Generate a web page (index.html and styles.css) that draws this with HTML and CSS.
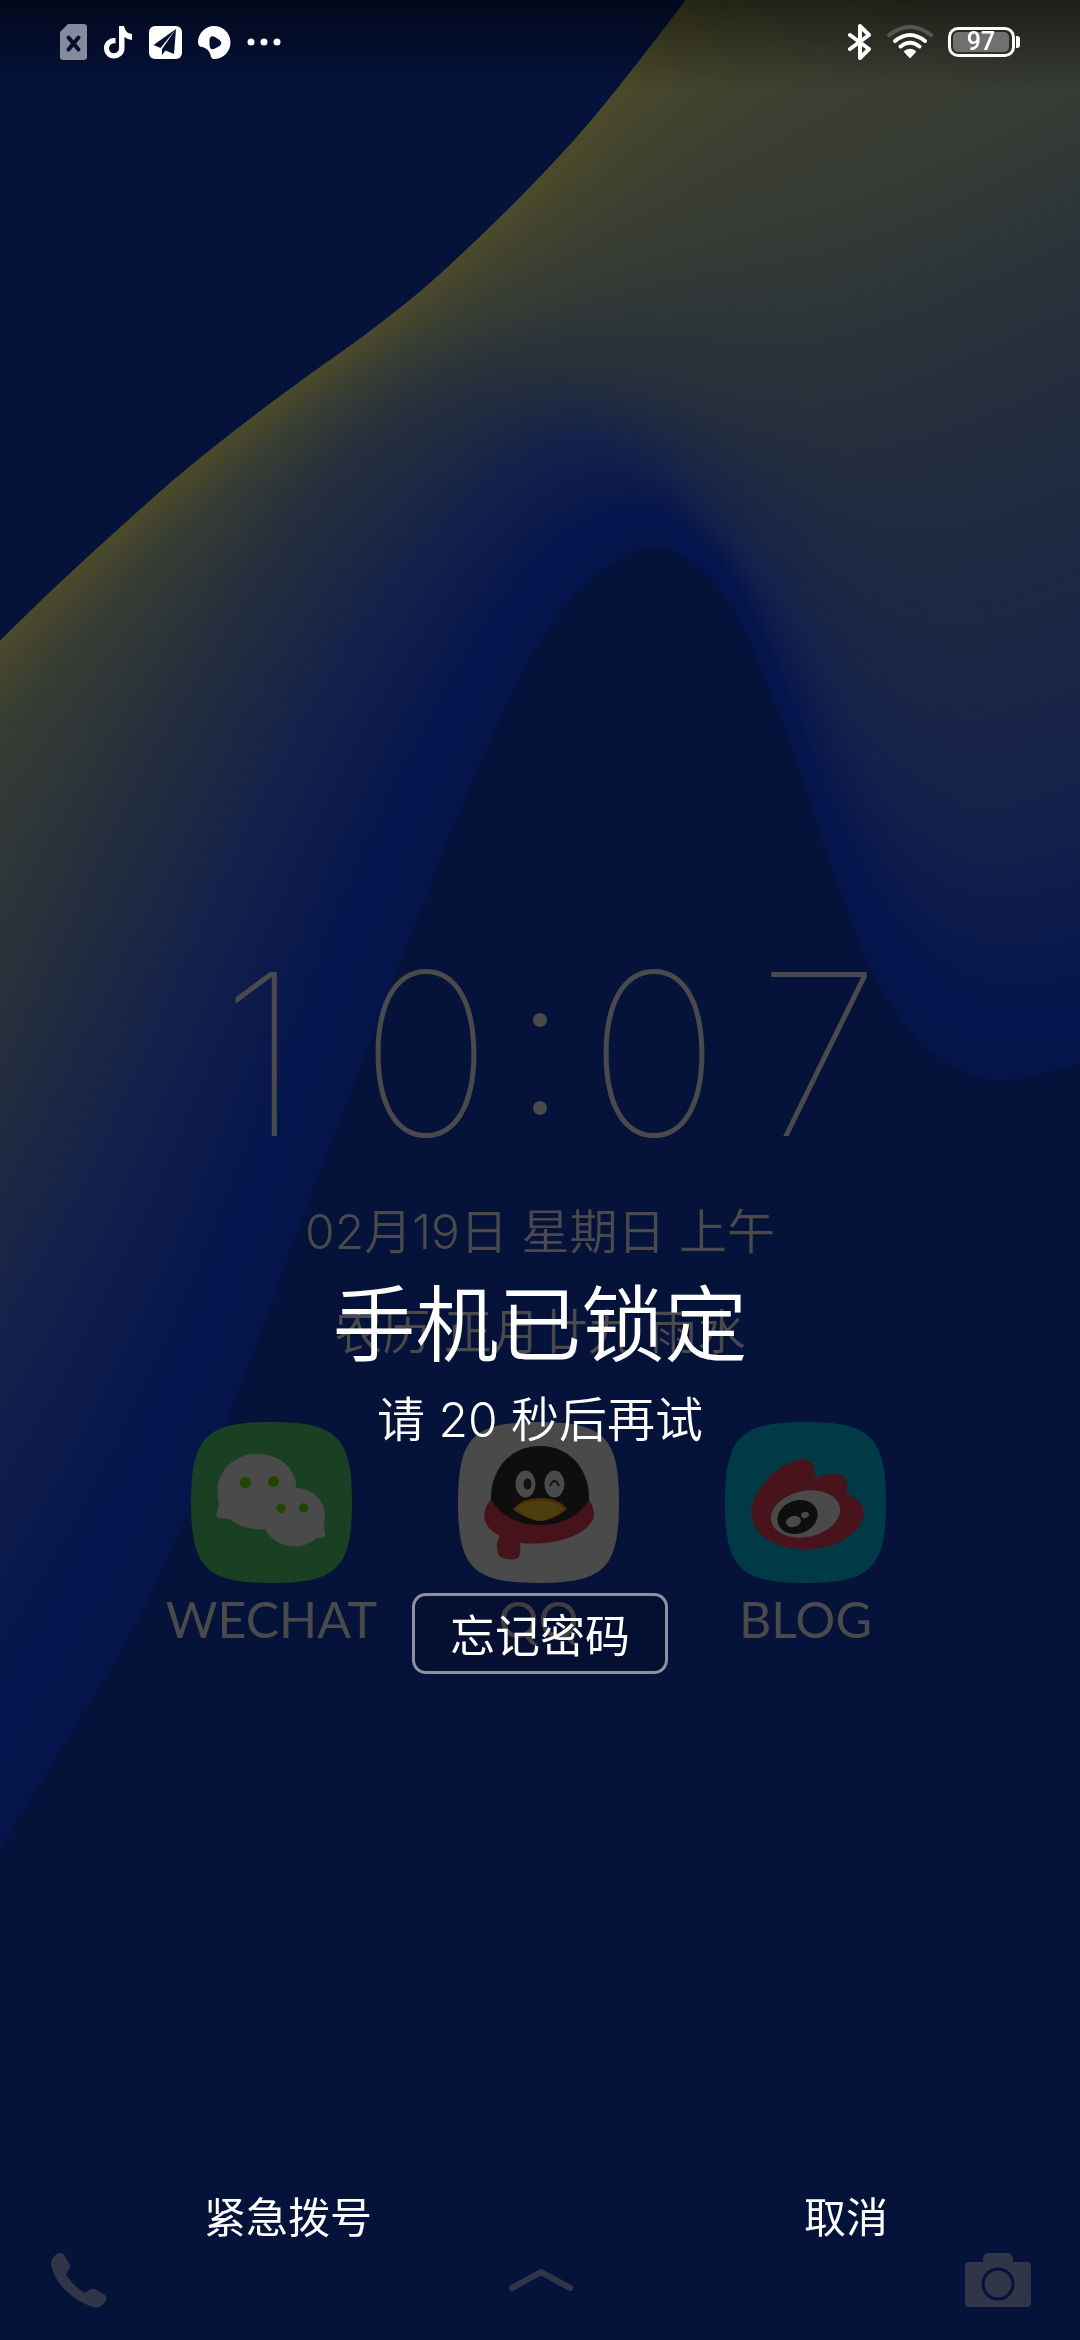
FILE: index.html
```html
<!DOCTYPE html>
<html lang="zh-CN">
<head>
<meta charset="utf-8">
<meta name="viewport" content="width=device-width, initial-scale=1">
<title>手机已锁定</title>
<link rel="stylesheet" href="styles.css">
</head>
<body>
<main class="phone">
  <canvas class="wallpaper" id="wallpaper" width="1080" height="2340" aria-hidden="true"></canvas>

  <section class="home">
    <header class="status">
      <div class="status-group status-left">
        <svg class="ico-sim" viewBox="0 0 27 36" aria-hidden="true"><path fill="#858a9c" fill-rule="evenodd" d="M8 0H24Q27 0 27 3V33Q27 36 24 36H3Q0 36 0 33V8Z"/><path d="M8.500 13.500L18.500 25.500M18.500 13.500L8.500 25.500" stroke="#040e2b" stroke-width="4" stroke-linecap="round"/></svg>
        <svg class="ico-note" viewBox="0 0 30 33" aria-hidden="true"><path fill="#fff" d="M16 0H21Q22 7 29 8V14Q25 14 21.500 11V22.500A10.300 10.300 0 1 1 12.500 12V17.500A5 5 0 1 0 16 22.500Z"/></svg>
        <svg class="ico-app" viewBox="0 0 33 33" aria-hidden="true"><rect width="33" height="33" rx="6" fill="#fff"/><path fill="#040f2f" d="M27 3L4.500 19L11.500 22ZM27 3L13 23V29L16.500 24.500L25 28Z"/></svg>
        <svg class="ico-app" viewBox="0 0 33 33" aria-hidden="true"><path fill="#fff" d="M16 0A16.500 16.500 0 0 1 16 33Q13 33 12.500 29Q11 23 4.500 21Q0 21 0 16A16.500 16.500 0 0 1 16 0Z"/><path fill="#040f2f" d="M11.500 14Q12 8.500 17 11L21.500 14Q25 17 21.500 20L17 22.500Q12 25 11.500 19Z"/></svg>
        <svg class="ico-more" viewBox="0 0 34 8" aria-hidden="true" fill="#fff"><circle cx="4" cy="4" r="3.500"/><circle cx="17" cy="4" r="3.500"/><circle cx="30" cy="4" r="3.500"/></svg>
      </div>
      <div class="status-group status-right">
        <svg class="ico-bt" viewBox="0 0 24 36" aria-hidden="true"><path fill="none" stroke="#fff" stroke-width="4" stroke-linejoin="round" stroke-linecap="round" d="M2 11L21 25L12 34V2L21 11L2 25"/></svg>
        <svg class="ico-wifi" viewBox="0 0 46 34" aria-hidden="true" fill="none" stroke="#fff" stroke-width="4" stroke-linecap="round"><path stroke="#545650" d="M2 10Q23 -6 44 10"/><path d="M8 16Q23 4 38 16"/><path d="M13.500 21.500Q23 14 32.500 21.500"/><path fill="#fff" stroke-width="2" stroke-linejoin="round" d="M18 26.500Q23 23 28 26.500L23 32Z"/></svg>
        <div class="battery"><span class="battery-level">97</span></div>
      </div>
    </header>

    <div class="clock">
      <time class="time" datetime="10:07"><span>1</span><span>0</span><span class="colon"><i></i><i></i></span><span>0</span><span>7</span></time>
      <p class="date">02月19日 星期日 上午</p>
      <p class="lunar">农历 正月廿九 雨水</p>
    </div>

    <nav class="apps">
      <a class="app" href="#wechat">
        <svg class="app-icon" viewBox="0 0 161 161" aria-hidden="true"><path fill="#1a4024" d="M80.500 0C146 0 161 15 161 80.500S146 161 80.500 161S0 146 0 80.500S15 0 80.500 0Z"/><path fill="#4a4a4a" d="M66 32C90 32 105 47 105.500 66C123 67 134 79 134 95Q132 105 134 111Q135 116 130 116H126C110 130 84 126 74 107C60 108 48 105 39 97L28 96Q24 95 26 90Q29 84 27 76C23 51 42 32 66 32Z"/><g fill="#224500"><circle cx="54.500" cy="60.500" r="5.500"/><circle cx="82.500" cy="59.500" r="5.500"/><circle cx="90" cy="86.500" r="4.700"/><circle cx="112.500" cy="86" r="4.700"/></g></svg>
        <span class="app-name">WECHAT</span>
      </a>
      <a class="app" href="#qq">
        <svg class="app-icon" viewBox="0 0 161 161" aria-hidden="true"><path fill="#4a4a4a" d="M80.500 0C146 0 161 15 161 80.500S146 161 80.500 161S0 146 0 80.500S15 0 80.500 0Z"/><path fill="#46131b" d="M33 78H131Q138 88 135 98C125 115 95 124 62 121Q63 133 60 136Q54 139 45 136Q39 134 39 126Q38 119 42 114C27 107 20 92 33 78Z"/><path fill="#0e0e0e" d="M82 24C112 24 132 48 131 78C121 95 101 103 82 103C61 103 43 94 33 78C32 48 52 24 82 24Z"/><g fill="#4a4a4a"><ellipse cx="67.500" cy="62" rx="10" ry="13.500"/><ellipse cx="96.500" cy="62" rx="10" ry="13.500"/></g><ellipse cx="69.500" cy="62" rx="4" ry="5.500" fill="#111"/><path d="M92 64Q96.500 54 101 64" fill="none" stroke="#111" stroke-width="2"/><path fill="#4b2f07" d="M55 87Q64 76 82 76Q101 76 109 87Q100 95 91 97Q82 101 73 97Q62 94 55 87Z"/><path fill="#4b400c" d="M58 87Q66 79 82 79Q98 79 106 87Q90 99 82 99Q73 98 58 87Z"/></svg>
        <span class="app-name">QQ</span>
      </a>
      <a class="app" href="#blog">
        <svg class="app-icon" viewBox="0 0 161 161" aria-hidden="true"><path fill="#003a47" d="M80.500 0C146 0 161 15 161 80.500S146 161 80.500 161S0 146 0 80.500S15 0 80.500 0Z"/><path fill="#48131a" d="M26 89C28 70 49 44 72 38C84 34 91 42 90 57C101 51 113 50 119 55Q124 60 121 72C133 76 139 83 139 92C136 113 110 127 80 127C48 127 26 112 26 89Z"/><ellipse cx="80.500" cy="92" rx="35" ry="23" transform="rotate(-12 80.500 92)" fill="#4a4a4a"/><ellipse cx="72.500" cy="95" rx="20.500" ry="16.500" transform="rotate(-20 72.500 95)" fill="#0e0e0e"/><ellipse cx="68.500" cy="99.500" rx="7.500" ry="5.500" transform="rotate(-15 68.500 99.500)" fill="#4a4a4a"/><ellipse cx="80" cy="93" rx="4" ry="3" transform="rotate(-15 80 93)" fill="#4a4a4a"/></svg>
        <span class="app-name">BLOG</span>
      </a>
    </nav>

    <footer class="shortcuts">
      <button class="shortcut" aria-label="电话"><svg class="ico-phone" viewBox="0 0 56 56" aria-hidden="true"><path fill="#303647" d="M2 6Q5 1 10 1Q12 1 13 3L19 13Q20 15 18 17L15 22Q21 33 34 41L40 37Q42 36 44 37L54 43Q56 45 55 48Q53 53 48 55Q45 56 42 55C20 48 3 30 0 12Q0 8 2 6Z"/></svg></button>
      <svg class="ico-up" viewBox="0 0 64 24" aria-hidden="true"><path fill="none" stroke="#303647" stroke-width="6" stroke-linecap="round" stroke-linejoin="round" d="M3 20L32 4L61 20"/></svg>
      <button class="shortcut" aria-label="相机"><svg class="ico-camera" viewBox="0 0 66 54" aria-hidden="true"><path fill="#303647" d="M18 9V5Q19 0 24 0H42Q47 0 48 5V9H62Q66 9 66 13V50Q66 54 62 54H4Q0 54 0 50V13Q0 9 4 9Z"/><circle cx="33" cy="31" r="15" fill="none" stroke="#05123a" stroke-width="3"/></svg></button>
    </footer>
  </section>

  <section class="lock">
    <div class="message">
      <h1 class="title">手机已锁定</h1>
      <p class="hint">请 20 秒后再试</p>
      <button class="forgot">忘记密码</button>
    </div>
    <div class="actions">
      <button class="action">紧急拨号</button>
      <button class="action">取消</button>
    </div>
  </section>
</main>
<script src="wallpaper.js"></script>
</body>
</html>
```
FILE: styles.css
```css
* { box-sizing: border-box; }
body {
  margin: 0;
  background: #05123a;
  font-family: Inter, "Noto Sans CJK SC", sans-serif;
  color: #fff;
}
h1, p { margin: 0; }
button {
  padding: 0;
  border: 0;
  background: none;
  color: inherit;
  font: inherit;
}
a { color: inherit; text-decoration: none; }
svg { display: block; }

.phone {
  position: relative;
  display: grid;
  min-height: 100vh;
}
.phone::after {
  content: "";
  position: absolute;
  inset: 0 0 auto;
  height: 88px;
  background: linear-gradient(rgba(0, 0, 0, .5), transparent);
  pointer-events: none;
}
.wallpaper {
  position: absolute;
  width: 100%;
  height: 100%;
  object-fit: cover;
}

/* home screen, dimmed */
.home {
  grid-area: 1 / 1;
  position: relative;
  display: flex;
  flex-direction: column;
  color: #4a4a4a;
}

.status {
  position: relative;
  z-index: 1;
  display: flex;
  justify-content: space-between;
  padding: 24px 60px 0;
}
.status-group { display: flex; align-items: center; height: 36px; }
.status-left { gap: 16px; }
.status-right { gap: 15px; }
.ico-sim { width: 27px; height: 36px; }
.ico-note { width: 30px; height: 33px; }
.ico-app { width: 33px; height: 33px; }
.ico-more { width: 34px; height: 8px; }
.ico-bt { width: 24px; height: 36px; }
.ico-wifi { width: 46px; height: 34px; }
.battery {
  position: relative;
  width: 67px;
  height: 30px;
  margin-right: 5px;
  padding: 2px;
  border: 3px solid #fff;
  border-radius: 10px;
}
.battery::after {
  content: "";
  position: absolute;
  top: 6px;
  right: -8px;
  width: 4px;
  height: 12px;
  border-radius: 0 3px 3px 0;
  background: #fff;
}
.battery-level {
  display: block;
  width: 56px;
  height: 20px;
  border-radius: 5px;
  background: #70716f;
  color: #fff;
  font: 500 25px/20px Roboto, sans-serif;
  text-align: center;
}

.clock { margin-top: 890px; text-align: center; }
.time {
  display: grid;
  grid-template-columns: 165px 165px 63px 165px 165px;
  justify-content: center;
  font-size: 226px;
  font-weight: 100;
  font-optical-sizing: none;
  line-height: 208px;
}
.colon {
  display: flex;
  flex-direction: column;
  align-items: center;
  justify-content: center;
  gap: 74px;
  padding-top: 20px;
}
.colon i { width: 14px; height: 14px; border-radius: 50%; background: currentColor; }
.date, .lunar {
  font-size: 48px;
  font-weight: 350;
  line-height: 100px;
}
.date { margin-top: 24px; }

.apps {
  display: grid;
  grid-template-columns: repeat(3, 267px);
  justify-content: center;
  margin-top: 40px;
  padding-right: 3px;
}
.app { display: flex; flex-direction: column; align-items: center; }
.app-icon { width: 161px; height: 161px; }
.app-name {
  margin-top: 4px;
  font: 50px/64px Lato, sans-serif;
}

.shortcuts {
  display: flex;
  align-items: center;
  justify-content: space-between;
  margin-top: auto;
  padding: 0 49px 32px 51px;
}
.shortcut { width: 66px; }
.ico-phone { width: 56px; height: 56px; }
.ico-up { width: 64px; height: 24px; }
.ico-camera { width: 66px; height: 54px; }

/* lockout notice above the home screen */
.lock {
  grid-area: 1 / 1;
  position: relative;
  display: flex;
  flex-direction: column;
  justify-content: space-between;
}
.message {
  display: flex;
  flex-direction: column;
  align-items: center;
  padding-top: 1265px;
}
.title {
  font-size: 83px;
  font-weight: 350;
  line-height: 120px;
}
.hint {
  font-size: 48px;
  font-weight: 350;
  line-height: 70px;
}
.forgot {
  height: 81px;
  margin-top: 138px;
  padding: 0 35px;
  border: 3px solid rgba(255, 255, 255, .55);
  border-radius: 14px;
  background: rgba(0, 0, 0, .15);
  font-size: 45px;
}
.actions {
  display: flex;
  justify-content: space-between;
  padding: 0 192px 92px 204px;
}
.action { font-size: 42px; line-height: 60px; }
```
FILE: wallpaper.js
```js
// The wave is a set of colour bands. Each band boundary is a curve y(x).
const columns = [0, 60, 130, 180, 240, 300, 360, 420, 480, 540, 590, 650, 700, 740, 790, 830, 870, 920, 990, 1080];
const bands = [
  { color: '#4b4a2a', y: [640, 582, 518, 474, 426, 381, 338, 291, 236, 176, 121, 46, -20, -75, -150, -210, -275, -350, -460, -600] },
  { color: '#363b34', y: [735, 665, 587, 535, 480, 429, 385, 347, 318, 296, 276, 255, 238, 226, 211, 199, 185, 165, 132, 85] },
  { color: '#252f3c', y: [1045, 910, 760, 675, 580, 503, 447, 408, 384, 374, 376, 388, 402, 414, 424, 425, 417, 400, 370, 330] },
  { color: '#14214a', y: [1340, 1236, 1095, 980, 846, 730, 632, 553, 488, 450, 441, 462, 504, 545, 614, 685, 750, 800, 825, 800] },
  { color: '#04154d', y: [1720, 1620, 1490, 1385, 1235, 1065, 905, 772, 660, 575, 532, 513, 545, 598, 710, 820, 905, 975, 1020, 1020] },
  { color: '#04154b', y: [1848, 1750, 1634, 1529, 1386, 1222, 1066, 909, 762, 640, 580, 547, 569, 623, 744, 863, 967, 1042, 1079, 1065] }
];

function curveAt(points, x) {
  let i = 0;
  while (i < columns.length - 2 && x > columns[i + 1]) i++;
  const slope = k => {
    const a = Math.max(k - 1, 0);
    const b = Math.min(k + 1, columns.length - 1);
    return (points[b] - points[a]) / (columns[b] - columns[a]);
  };
  const w = columns[i + 1] - columns[i];
  const t = (x - columns[i]) / w;
  const t2 = t * t;
  const t3 = t2 * t;
  return (2 * t3 - 3 * t2 + 1) * points[i] + (t3 - 2 * t2 + t) * w * slope(i)
    + (3 * t2 - 2 * t3) * points[i + 1] + (t3 - t2) * w * slope(i + 1);
}

const canvas = document.getElementById('wallpaper');
const ctx = canvas.getContext('2d');
ctx.fillStyle = '#05123a';
ctx.fillRect(0, 0, canvas.width, canvas.height);
for (let x = 0; x < canvas.width; x++) {
  const ys = bands.map(band => curveAt(band.y, x));
  const top = ys[0];
  const bottom = ys[ys.length - 1];
  const fill = ctx.createLinearGradient(0, top, 0, bottom);
  bands.forEach((band, i) => fill.addColorStop((ys[i] - top) / (bottom - top), band.color));
  ctx.fillStyle = fill;
  ctx.fillRect(x, top, 1, bottom - top);
}
```
